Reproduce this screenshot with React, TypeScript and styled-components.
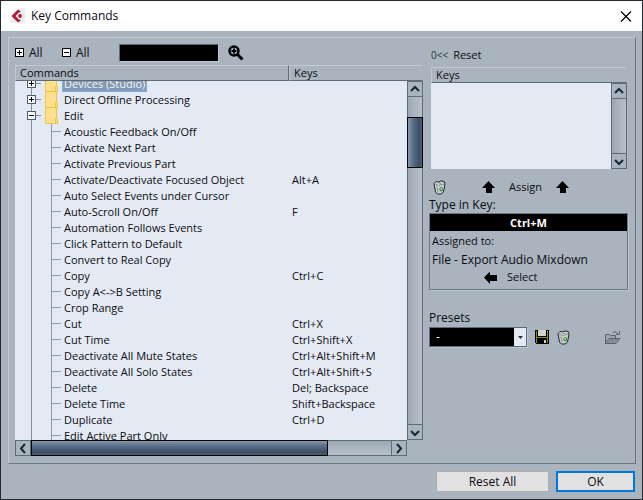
import React, { useLayoutEffect, useRef } from "react";
import styled, { createGlobalStyle, css } from "styled-components";

const Global = createGlobalStyle`
  * { box-sizing: border-box; }
  body { margin: 0; background: #242830; }
  body, button, input, select, table { font: 12px/16px "Open Sans", "Noto Sans", sans-serif; color: #0c0c10; }
  button { border: 0; padding: 0; background: none; }
  svg { display: block; flex: none; }
`;

const Dialog = styled.main`
  display: flex;
  flex-direction: column;
  height: 100vh;
  min-height: 420px;
  border: 1px solid #242830;
  background: #a9b4bf;
`;
const TitleBar = styled.header`
  display: flex;
  align-items: center;
  gap: 5px;
  height: 30px;
  padding: 0 8px 0 9px;
  background: #fff;
`;
const Title = styled.h1`
  flex: 1;
  margin: 0;
  font-size: 12px;
  font-weight: 400;
`;
const Content = styled.section`
  flex: 1;
  min-height: 0;
  display: grid;
  grid-template-columns: minmax(0, 408fr) minmax(0, 199fr);
  gap: 6px;
  margin: 6px 6px 0 7px;
  padding: 0 7px 7px 6px;
  border: 1px solid #6b7785;
  border-color: #c0cad4 #6b7785 #6b7785 #c0cad4;
`;
const Column = styled.div`
  display: flex;
  flex-direction: column;
  min-width: 0;
  min-height: 0;
`;
const Toolbar = styled.div`
  display: flex;
  align-items: center;
  height: 27px;
  padding-top: 2px;
`;
const ResetBar = styled(Toolbar)`
  height: 29px;
  padding-top: 5px;
`;
const ToolButton = styled.button<{ $width?: number; $small?: boolean }>`
  display: flex;
  align-items: center;
  gap: 5px;
  width: ${(p) => (p.$width ? `${p.$width}px` : "auto")};
  font-size: ${(p) => (p.$small ? 11 : 12)}px;
`;
const ResetGlyph = styled.span`
  display: flex;
  align-items: center;
  padding-left: 2px;
  font-size: 10px;
  color: #2a323c;
`;
const Search = styled.input`
  width: 100px;
  height: 18px;
  margin: 0 9px 0 10px;
  padding: 0 4px;
  border: 1px solid #5f6b78;
  border-color: #5f6b78 #c0cad4 #c0cad4 #5f6b78;
  background: #000;
  color: #fff;
`;

const ListFrame = styled.div`
  flex: 1;
  min-height: 0;
  display: grid;
  grid-template: 16px minmax(0, 1fr) 16px / minmax(0, 1fr) 16px;
`;
const Scroller = styled.div`
  grid-area: 1 / 1 / 3 / 3;
  overflow: hidden;
  background: #e3eaf3;
`;
const Table = styled.table`
  width: 100%;
  table-layout: fixed;
  border-collapse: separate;
  border-spacing: 0;
  font-size: 11px;
`;
const HeadCell = styled.th<{ $width?: number }>`
  position: sticky;
  top: 0;
  z-index: 1;
  width: ${(p) => (p.$width ? `${p.$width}px` : "auto")};
  height: 16px;
  padding: 0 4px;
  border: 1px solid #5f6b78;
  border-color: #c0cad4 #5f6b78 #5f6b78 #c0cad4;
  background: #a9b4bf;
  text-align: left;
  font-weight: 400;
  line-height: 14px;
  &:last-child { border-right-color: #a9b4bf; }
`;
const Cell = styled.td`
  height: 16px;
  padding: 0;
  white-space: nowrap;
  &:last-child { padding-left: 3px; }
`;
const Node = styled.div`
  display: flex;
  height: 16px;
`;
const NodeText = styled.span<{ $selected?: boolean }>`
  ${(p) => p.$selected && css`
    margin-left: -2px;
    padding: 0 2px;
    outline: 1px solid #78b0e8;
    outline-offset: -1px;
    background: #8599b3;
    color: #f0f5fa;
  `}
`;

const Bar = styled.div<{ $vertical?: boolean; $area: string }>`
  grid-area: ${(p) => p.$area};
  z-index: 2;
  display: flex;
  flex-direction: ${(p) => (p.$vertical ? "column" : "row")};
  border: 1px solid #5f6b78;
  background: linear-gradient(${(p) => (p.$vertical ? "90deg" : "180deg")}, #9ca8b3, #b8c1ca);
`;
const BarButton = styled.button<{ $edge: "top" | "bottom" | "left" | "right" }>`
  flex: 0 0 15px;
  display: flex;
  align-items: center;
  justify-content: center;
  background: #a9b4bf;
  border-${(p) => p.$edge}: 1px solid #5f6b78;
`;
const Space = styled.div<{ $grow: number }>`
  flex: ${(p) => p.$grow} 0 0px;
`;
const Thumb = styled(Space)<{ $vertical?: boolean }>`
  margin: ${(p) => (p.$vertical ? "0 -1px" : "-1px 0")};
  border: 1px solid #000;
  background: linear-gradient(${(p) => (p.$vertical ? "90deg" : "180deg")}, #8497ad, #5a7088 35%, #3b4f65 80%, #4a6078);
`;

const KeysList = styled.div`
  display: grid;
  grid-template: 16px 86px / minmax(0, 1fr) 16px;
  margin: 0 1px 0 2px;
`;
const KeysTable = styled(Table)`
  grid-area: 1 / 1 / 2 / 3;
`;
const KeysBody = styled.div`
  grid-area: 2 / 1 / 3 / 3;
  background: #e3eaf3;
`;
const AssignRow = styled.div`
  display: flex;
  align-items: center;
  gap: 14px;
  height: 20px;
  margin-top: 8px;
  padding-left: 4px;
`;
const AssignButton = styled.button`
  display: flex;
  align-items: center;
  gap: 14px;
  margin-left: 22px;
  font-size: 11px;
`;
const FieldLabel = styled.label`
  display: block;
  height: 16px;
`;
const KeyBox = styled.div`
  height: 77px;
  border: 1px solid #6b7785;
  box-shadow: 1px 1px #bcc6d0;
`;
const KeyInput = styled.input`
  display: block;
  width: 100%;
  height: 17px;
  border: 0;
  padding: 0;
  background: #000;
  color: #fff;
  font-size: 11px;
  font-weight: 700;
  text-align: center;
`;
const AssignedLine = styled.p<{ $small?: boolean }>`
  margin: 0;
  padding: 0 2px;
  font-size: ${(p) => (p.$small ? 11 : 12)}px;
  line-height: 19px;
`;
const SelectButton = styled.button`
  display: flex;
  align-items: center;
  gap: 10px;
  margin-left: 54px;
  font-size: 11px;
`;
const Presets = styled.div`
  margin-top: 20px;
`;
const PresetRow = styled.div`
  display: flex;
  align-items: center;
  gap: 8px;
  margin-top: 1px;
  padding-right: 7px;
`;
const SelectWrap = styled.div`
  display: grid;
  grid-template-columns: minmax(0, 1fr) 12px;
  flex: 0 1 98px;
  height: 20px;
  border: 1px solid #5f6b78;
  box-shadow: 1px 1px #bcc6d0;
  background: #000;
`;
const PresetSelect = styled.select`
  grid-area: 1 / 1 / 2 / 3;
  appearance: none;
  border: 0;
  padding: 0 6px;
  background: transparent;
  color: #fff;
`;
const SelectArrow = styled.span`
  grid-area: 1 / 2;
  display: flex;
  align-items: center;
  justify-content: center;
  background: #e3eaf3;
  pointer-events: none;
`;
const Spacer = styled.span`
  flex: 1;
`;
const Footer = styled.footer`
  display: flex;
  justify-content: flex-end;
  gap: 7px;
  padding: 7px;
`;
const FooterButton = styled.button<{ $primary?: boolean }>`
  width: ${(p) => (p.$primary ? 79 : 113)}px;
  height: 21px;
  border: ${(p) => (p.$primary ? "2px solid #0078d7" : "1px solid #adadad")};
  background: #e1e1e1;
`;

const Toggle = ({ open }: { open?: boolean }) => (
  <svg width="9" height="9" shapeRendering="crispEdges">
    <path d="M.5.5h8v8h-8z" fill="#fff" stroke="#000" />
    <path d={open ? "M2 4h5v1H2z" : "M2 4h5v1H2zM4 2h1v5H4z"} />
  </svg>
);

const Guides = ({ kind }: { kind: "open" | "closed" | "leaf" }) => (
  <svg width="49" height="16" shapeRendering="crispEdges">
    <path d="M16 0h1v16h-1z" fill="#7f8fa0" />
    {kind === "leaf" ? (
      <path d="M36 0h1v16h-1zM37 7h9v1h-9z" fill="#8c9aa9" />
    ) : (
      <>
        <path d="M21 7h5v1h-5z" fill="#7f8fa0" />
        <path d="M12.500 3.500h8v8h-8z" fill="#fff" stroke="#4d5d70" />
        <path d={kind === "open" ? "M14 7h5v1h-5z" : "M14 7h5v1h-5zM16 5h1v5h-1z"} />
        <path d="M30 0h10l2 2v8h1v6H30z" fill="#ffe08a" />
        <path d="M30 0h1v16h-1zM30 15h13v1H30zM41 0h1v10h-1zM40 10h1v5h-1zM42 10h1v6h-1z" fill="#efc44c" />
      </>
    )}
  </svg>
);

const chevrons = { top: "M2 7l4-4 4 4", bottom: "M2 4l4 4 4-4", left: "M8 1L4 5.500l4 4.500", right: "M4 1l4 4.500L4 10" };
const Chevron = ({ dir }: { dir: keyof typeof chevrons }) => (
  <svg width="12" height="11">
    <path d={chevrons[dir]} fill="none" stroke="#15263b" strokeWidth="2" />
  </svg>
);

const Arrow = ({ left }: { left?: boolean }) => (
  <svg width="13" height="13" viewBox="0 0 13 13">
    <path d={left ? "M0 6.500L6 .5V4h7v6H6v3z" : "M6.500 0L13 7h-3v5H4V7H0z"} />
  </svg>
);

const Bin = () => (
  <svg width="13" height="15" viewBox="0 0 13 15">
    <path d="M1 3.500L3 1.500l2.500.5L8 .8l3.500 1L12 4l-1.500 8L8 14H4.500L2.500 12z" fill="#c9cfd1" stroke="#22262a" />
    <path d="M2 4l3.500 1.500L11 4M5 2.500l3 1M4 6.500l1 5.500" fill="none" stroke="#858d92" />
    <path d="M7 10.500V8.500l1.500-1.500 1 1.500-.5 2.500z" fill="none" stroke="#168c22" />
  </svg>
);

const Floppy = () => (
  <svg width="14" height="14" shapeRendering="crispEdges">
    <path d="M0 0h14v14H1l-1-1z" />
    <path d="M1 1h1v12H1zM12 2h1v11h-1zM2 7h10v1H2z" fill="#8a8700" />
    <path d="M3 0h8v6H3zM12 1h1v1h-1zM9 10h2v3H9z" fill="#d2d2d2" />
  </svg>
);

const OpenFolder = () => (
  <svg width="17" height="15" fill="none" stroke="#59626b">
    <path d="M1.500 13.500v-9h4l1 1h5v3M1.500 13.500l3.500-5h11l-4 5z" fill="#9da7b1" />
    <path d="M2 13l3-4h10l-3 4z" fill="#858c93" stroke="none" />
    <path d="M9 3q2-3 4 0l1 1M15.500 1v3.500H12" />
  </svg>
);

const Magnifier = () => (
  <svg width="16" height="16">
    <circle cx="6" cy="6" r="4.500" fill="none" stroke="#000" strokeWidth="2.500" />
    <path d="M6 3.500v5M3.500 6h5" fill="none" stroke="#000" strokeWidth="2" />
    <path d="M9.500 9.500l5 5" stroke="#000" strokeWidth="3" />
  </svg>
);

const Logo = () => (
  <svg width="16" height="16" viewBox="0 0 16 16">
    <path d="M5 1l10-1v15H0z" fill="#ececec" />
    <path d="M8 1.500l3 2.300-2.500 1L5.500 8l3 3.200 2.500 1-3 2.300L1.500 8z" fill="#b01c38" />
    <circle cx="10" cy="8" r="1.900" fill="#b01c38" />
  </svg>
);

type ScrollProps = { area: string; vertical?: boolean; before?: number; thumb?: number; after: number };
const ScrollBar = ({ area, vertical, before = 0, thumb, after }: ScrollProps) => (
  <Bar $area={area} $vertical={vertical}>
    <BarButton aria-label={vertical ? "Scroll up" : "Scroll left"} $edge={vertical ? "bottom" : "right"}>
      <Chevron dir={vertical ? "top" : "left"} />
    </BarButton>
    {before > 0 && <Space $grow={before} />}
    {thumb && <Thumb $grow={thumb} $vertical={vertical} />}
    <Space $grow={after} />
    <BarButton aria-label={vertical ? "Scroll down" : "Scroll right"} $edge={vertical ? "top" : "left"}>
      <Chevron dir={vertical ? "bottom" : "right"} />
    </BarButton>
  </Bar>
);

type Row = { name: string; keys?: string; kind?: "open" | "closed"; selected?: boolean };
const rows: Row[] = [
  { name: "Devices (Studio)", kind: "closed", selected: true },
  { name: "Direct Offline Processing", kind: "closed" },
  { name: "Edit", kind: "open" },
  { name: "Acoustic Feedback On/Off" },
  { name: "Activate Next Part" },
  { name: "Activate Previous Part" },
  { name: "Activate/Deactivate Focused Object", keys: "Alt+A" },
  { name: "Auto Select Events under Cursor" },
  { name: "Auto-Scroll On/Off", keys: "F" },
  { name: "Automation Follows Events" },
  { name: "Click Pattern to Default" },
  { name: "Convert to Real Copy" },
  { name: "Copy", keys: "Ctrl+C" },
  { name: "Copy A<->B Setting" },
  { name: "Crop Range" },
  { name: "Cut", keys: "Ctrl+X" },
  { name: "Cut Time", keys: "Ctrl+Shift+X" },
  { name: "Deactivate All Mute States", keys: "Ctrl+Alt+Shift+M" },
  { name: "Deactivate All Solo States", keys: "Ctrl+Alt+Shift+S" },
  { name: "Delete", keys: "Del; Backspace" },
  { name: "Delete Time", keys: "Shift+Backspace" },
  { name: "Duplicate", keys: "Ctrl+D" },
  { name: "Edit Active Part Only" },
];

export default function App() {
  const scroller = useRef<HTMLDivElement>(null);
  useLayoutEffect(() => {
    if (scroller.current) scroller.current.scrollTop = 5;
  }, []);

  return (
    <>
      <Global />
      <Dialog>
        <TitleBar>
          <Logo />
          <Title>Key Commands</Title>
          <ToolButton aria-label="Close">
            <svg width="16" height="11"><path d="M3 .5l10 10M13 .5l-10 10" stroke="#000" strokeWidth="1.200" /></svg>
          </ToolButton>
        </TitleBar>
        <Content>
          <Column>
            <Toolbar>
              <ToolButton $width={47}><Toggle />All</ToolButton>
              <ToolButton $width={47}><Toggle open />All</ToolButton>
              <Search aria-label="Search" />
              <ToolButton aria-label="Find"><Magnifier /></ToolButton>
            </Toolbar>
            <ListFrame>
              <Scroller ref={scroller}>
                <Table>
                  <thead>
                    <tr><HeadCell $width={274}>Commands</HeadCell><HeadCell>Keys</HeadCell></tr>
                  </thead>
                  <tbody>
                    {rows.map((r) => (
                      <tr key={r.name}>
                        <Cell>
                          <Node>
                            <Guides kind={r.kind ?? "leaf"} />
                            <NodeText $selected={r.selected}>{r.name}</NodeText>
                          </Node>
                        </Cell>
                        <Cell>{r.keys}</Cell>
                      </tr>
                    ))}
                  </tbody>
                </Table>
              </Scroller>
              <ScrollBar area="2 / 2" vertical before={20} thumb={50} after={258} />
              <ScrollBar area="3 / 1" thumb={297} after={63} />
            </ListFrame>
          </Column>
          <Column>
            <ResetBar>
              <ToolButton $small><ResetGlyph>0&lt;&lt;</ResetGlyph>Reset</ToolButton>
            </ResetBar>
            <KeysList>
              <KeysTable><thead><tr><HeadCell>Keys</HeadCell></tr></thead></KeysTable>
              <KeysBody />
              <ScrollBar area="2 / 2" vertical after={1} />
            </KeysList>
            <AssignRow>
              <ToolButton aria-label="Delete key"><Bin /></ToolButton>
              <AssignButton><Arrow />Assign<Arrow /></AssignButton>
            </AssignRow>
            <FieldLabel htmlFor="key">Type in Key:</FieldLabel>
            <KeyBox>
              <KeyInput id="key" defaultValue="Ctrl+M" />
              <AssignedLine $small>Assigned to:</AssignedLine>
              <AssignedLine>File - Export Audio Mixdown</AssignedLine>
              <SelectButton><Arrow left />Select</SelectButton>
            </KeyBox>
            <Presets>
              <FieldLabel htmlFor="preset">Presets</FieldLabel>
              <PresetRow>
                <SelectWrap>
                  <PresetSelect id="preset"><option>-</option></PresetSelect>
                  <SelectArrow><svg width="5" height="3"><path d="M0 0h5L2.500 3z" fill="#333" /></svg></SelectArrow>
                </SelectWrap>
                <ToolButton aria-label="Store preset"><Floppy /></ToolButton>
                <ToolButton aria-label="Remove preset"><Bin /></ToolButton>
                <Spacer />
                <ToolButton aria-label="Import file"><OpenFolder /></ToolButton>
              </PresetRow>
            </Presets>
          </Column>
        </Content>
        <Footer>
          <FooterButton>Reset All</FooterButton>
          <FooterButton $primary>OK</FooterButton>
        </Footer>
      </Dialog>
    </>
  );
}
